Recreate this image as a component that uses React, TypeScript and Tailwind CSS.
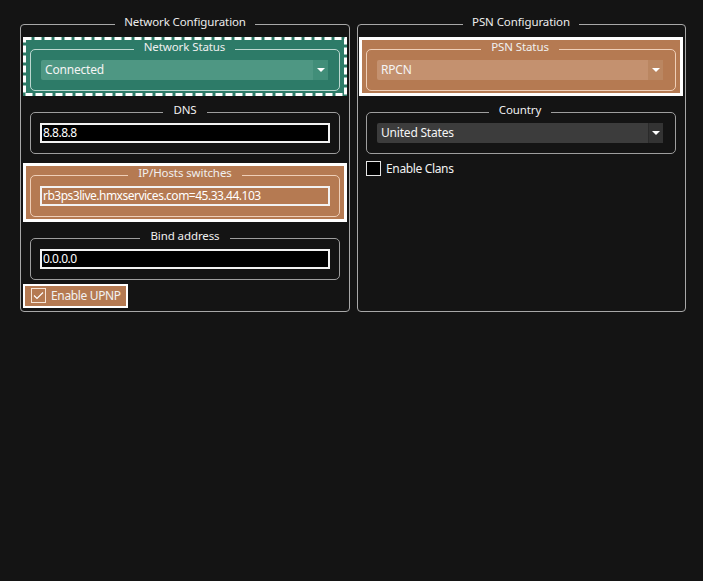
import type { ReactNode } from "react";

const Arrow = () => (
  <svg width="8" height="4" viewBox="0 0 8 4">
    <path d="M0 0 H8 L4 4 Z" fill="#ffffff" />
  </svg>
);

const Combo = ({
  value,
  bg,
  arrowBg,
}: {
  value: string;
  bg: string;
  arrowBg: string;
}) => (
  <div className={`flex h-[20px] items-stretch rounded-l-[2px] ${bg}`}>
    <span className="flex-1 pl-[4px] leading-[20px] text-[12px] tracking-[-0.2px] text-[#f4f4f4]">
      {value}
    </span>
    <span className={`flex w-[15px] items-center justify-center ${arrowBg}`}>
      <Arrow />
    </span>
  </div>
);

const TextBox = ({ value }: { value: string }) => (
  <div className="h-[20px] border-[2px] border-[#f2f2f2] pl-px leading-[16px] text-[12px] tracking-[-0.5px] text-white">
    {value}
  </div>
);

// inner group box (QGroupBox look)
const Box = ({
  title,
  border,
  pad,
  children,
}: {
  title: string;
  border: string;
  pad: string;
  children: ReactNode;
}) => (
  <fieldset className={`rounded-[5px] border pt-[2px] pb-[10px] ${border} ${pad}`}>
    <legend className="mx-auto px-[10px] pb-[4px] leading-[14px] text-[#f0f0f0]">{title}</legend>
    {children}
  </fieldset>
);

const Section = ({ className, children }: { className: string; children: ReactNode }) => (
  <div className={`relative border-[3px] px-[4px] pb-[2px] ${className}`}>{children}</div>
);

const Dashes = () => (
  <svg className="pointer-events-none absolute -left-[3px] -top-[3px]" width="324" height="59">
    <rect
      x="1.5"
      y="1.5"
      width="321"
      height="56"
      fill="none"
      stroke="#ffffff"
      strokeWidth="3"
      strokeDasharray="7 3"
    />
  </svg>
);

const Check = ({
  label,
  checked,
  className,
}: {
  label: string;
  checked?: boolean;
  className: string;
}) => (
  <div className={`flex items-center self-start border-[2px] pr-[5px] pt-[2px] pb-[3px] ${className}`}>
    <span
      className={`flex h-[15px] w-[15px] items-center justify-center border ${
        checked ? "border-[#f6e4d6]" : "border-[#e6e6e6] bg-black"
      }`}
    >
      {checked && (
        <svg width="13" height="13" viewBox="0 0 13 13">
          <path d="M2 6.5 L5 9.5 L11 3.5" fill="none" stroke="#ffffff" strokeWidth="1.1" />
        </svg>
      )}
    </span>
    <span className="ml-[5px] leading-[15px] text-[12px] tracking-[-0.35px] text-[#f2f2f2]">{label}</span>
  </div>
);

const Group = ({ title, width, children }: { title: string; width: string; children: ReactNode }) => (
  <fieldset className={`rounded-[4px] border border-[#a8a8a8] pt-[4px] pb-[3px] ${width}`}>
    <legend className="mx-auto px-[9px] pb-[4px] leading-[14px] text-[#ececec]">{title}</legend>
    <div className="flex flex-col">{children}</div>
  </fieldset>
);

export default function App() {
  return (
    <div className="h-[581px] w-[703px] overflow-hidden bg-[#141414] font-['Noto_Sans',sans-serif] text-[11.5px] tracking-[-0.1px]">
      <div className="flex items-stretch gap-[7px] pl-[20px] pt-[15px]">
        <Group title="Network Configuration" width="w-[330px] px-[2px]">
          <Section className="border-[#2d7b68] bg-[#2d7b68]">
            <Dashes />
            <Box title="Network Status" border="border-[#bcd8d0]" pad="pl-[10px] pr-[11px]">
              <Combo value="Connected" bg="bg-[#4e9783]" arrowBg="bg-[#418e79]" />
            </Box>
          </Section>
          <Section className="mt-[4px] border-transparent">
            <Box title="DNS" border="border-[#9e9e9e]" pad="px-[9px]">
              <div className="bg-black">
                <TextBox value="8.8.8.8" />
              </div>
            </Box>
          </Section>
          <Section className="mt-[4px] border-white bg-[#b57a52]">
            <Box title="IP/Hosts switches" border="border-[#efcfb8]" pad="px-[9px]">
              <TextBox value="rb3ps3live.hmxservices.com=45.33.44.103" />
            </Box>
          </Section>
          <Section className="mt-[4px] border-transparent">
            <Box title="Bind address" border="border-[#9e9e9e]" pad="px-[9px]">
              <div className="bg-black">
                <TextBox value="0.0.0.0" />
              </div>
            </Box>
          </Section>
          <Check
            label="Enable UPNP"
            checked
            className="-mt-px border-white bg-[#b57a52] pl-[6px]"
          />
        </Group>

        <Group title="PSN Configuration" width="w-[329px] pl-px pr-[2px]">
          <Section className="border-white bg-[#b57a52]">
            <Box title="PSN Status" border="border-[#efcfb8]" pad="pl-[10px] pr-[12px]">
              <Combo value="RPCN" bg="bg-[#c4916f]" arrowBg="bg-[#ba8661]" />
            </Box>
          </Section>
          <Section className="mt-[4px] border-transparent">
            <Box title="Country" border="border-[#9e9e9e]" pad="pl-[10px] pr-[12px]">
              <Combo
                value="United States"
                bg="bg-[#3c3c3c]"
                arrowBg="bg-[#333333] border-l border-[#2a2a2a]"
              />
            </Box>
          </Section>
          <Check label="Enable Clans" className="-mt-[2px] border-transparent pl-[5px]" />
        </Group>
      </div>
    </div>
  );
}
